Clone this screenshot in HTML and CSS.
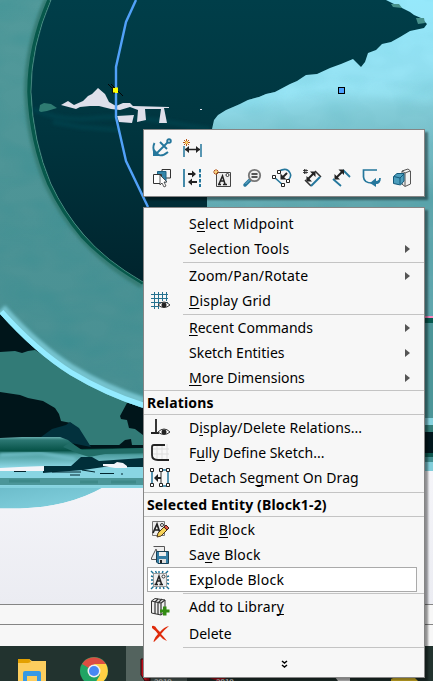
FILE: index.html
```html
<!DOCTYPE html>
<html lang="en">
<head>
<meta charset="utf-8">
<title>Sketch context menu</title>
<link rel="stylesheet" href="styles.css">
</head>
<body>
<svg class="scene" width="433" height="681" viewBox="0 0 433 681">
  <defs>
    <linearGradient id="page" gradientUnits="userSpaceOnUse" x1="0" y1="470" x2="0" y2="604"><stop stop-color="#f5f5f9"/><stop offset="1" stop-color="#ebecf2"/></linearGradient>
    <linearGradient id="deep" x2="0" y2="1"><stop stop-color="#003e49"/><stop offset=".4" stop-color="#003640"/><stop offset="1" stop-color="#00222b"/></linearGradient>
    <linearGradient id="ice" gradientUnits="userSpaceOnUse" x1="330" y1="0" x2="350" y2="205"><stop stop-color="#96e9fc"/><stop offset=".42" stop-color="#96e2f3"/><stop offset=".56" stop-color="#83ccd8"/><stop offset="1" stop-color="#5fa6ad"/></linearGradient>
    <linearGradient id="ring" x2="0" y2="1"><stop stop-color="#529a9b"/><stop offset=".5" stop-color="#4d9496"/><stop offset="1" stop-color="#488f92"/></linearGradient>
    <linearGradient id="pipe" x2="0" y2="1"><stop stop-color="#6aaeaf"/><stop offset=".06" stop-color="#2b7773"/><stop offset=".27" stop-color="#075348"/><stop offset=".36" stop-color="#4f9fa1"/><stop offset=".6" stop-color="#8ad5e2"/></linearGradient>
    <linearGradient id="lower" x2="1" y2="1"><stop stop-color="#6cbcca"/><stop offset=".7" stop-color="#80cedc"/><stop offset="1" stop-color="#438991"/></linearGradient>
    <filter id="soft"><feGaussianBlur stdDeviation="1.6"/></filter>
    <filter id="wide" x="-.1" y="-2" width="1.2" height="5"><feGaussianBlur stdDeviation="4"/></filter>
    <filter id="grain" x="0" y="0" width="1" height="1"><feTurbulence type="fractalNoise" baseFrequency=".025 .045" numOctaves="2" seed="4"/><feColorMatrix values="0 0 0 0 0  0 0 0 0 .22  0 0 0 0 .25  .55 0 0 0 -.2"/></filter>
    <clipPath id="ringclip"><path d="M0 0H51Q31 46 31 92Q33 142 51 184Q64 212 84 235Q105 260 143 282V408Q105 396 70 375Q35 353 0 314Z"/></clipPath>
    <clipPath id="iceclip"><path d="M386 0H433V317H143V208H207V145L212 129 214 120 218 115 226 110 240 104 248 100 259 97 266 94 275 92 290 84 297 81 306 75 317 74 330 68 341 64 353 59 357 63 361 67 365 62 368 53 376 50 382 44 391 42 400 37 410 31 424 28 427 24 421 18 414 15 410 12 402 8Z"/></clipPath>
  </defs>
  <rect width="433" height="604" fill="url(#page)"/>
  <path d="M0 0H433V470H0Z" fill="#00151a"/>
  <path d="M30 0H433V300H143L84 245 30 150Z" fill="url(#deep)"/>
  <path d="M0 352L15 351 22 353 28 351 35 350 60 365 143 404V445H88L82 434 71 423 61 421 59 414 55 408 43 401 28 398 20 395 0 392Z" fill="#327b77"/>
  <path d="M127 403L120 416 121 419 127 420 129 428 135 429 143 435V404Z" fill="#00151a"/>
  <path d="M41 437L52 429 66 425 70 422 79 428 91 447Z" fill="#02313d"/>
  <g clip-path="url(#ringclip)">
    <path d="M0 0H143V420H0Z" fill="url(#ring)"/>
    <rect width="143" height="410" filter="url(#grain)" opacity=".5"/>
    <path d="M0 310Q35 349 70 371Q105 392 143 404" fill="none" stroke="#74c2cd" stroke-width="14" filter="url(#soft)"/>
    <path d="M0 313Q35 352 70 374Q105 395 143 407" fill="none" stroke="#93ebff" stroke-width="9"/>
    <path d="M49 0Q29 46 29 92Q31 142 49 184Q62 212 82 235Q105 262 143 284" fill="none" stroke="#347b74" stroke-width="10" filter="url(#soft)"/>
    <path d="M49 0Q29 46 29 92Q31 142 49 184Q62 212 82 236Q105 261 143 283" fill="none" stroke="#07584b" stroke-width="3.500"/>
  </g>
  <path d="M51 0Q31 46 31 92Q33 142 51 184Q64 212 84 235Q105 260 143 282" fill="none" stroke="#62a495" stroke-width=".7" stroke-opacity=".8"/>
  <path d="M33 109Q60 122 95 118T190 126L210 129M53 122L80 127 120 130" fill="none" stroke="#06424e" stroke-width="5" filter="url(#soft)" opacity=".7"/>
  <path d="M39 111L40 105 44 103 51 104 57 108 47 111 41 112Z" fill="#2e7b72"/>
  <g clip-path="url(#iceclip)">
    <rect x="143" width="290" height="320" fill="url(#ice)"/>
    <path d="M240 102L330 86 433 97" fill="none" stroke="#9ceafa" stroke-width="7" filter="url(#wide)" opacity=".7"/>
    <rect x="200" width="233" height="320" filter="url(#grain)" opacity=".3"/>
  </g>
  <path d="M391 4L399 4 402 8 393 7ZM416 18L424 18 425 23 418 24Z" fill="#47918b"/>
  <path d="M61 105L68 101 74 105 83 101 88 96 92 94 98 88 105 94 109 102 116 106 123 103 130 103 133 106 169 107V108H164L167 123H159L161 109 145 109 146 120 137 122 138 110 130 107 120 110 111 109 99 106 90 106 80 107 76 109Z" fill="#dedfea"/>
  <path d="M117 116L134 115 132 123 119 122ZM200 109H202V110H200Z" fill="#dedfea"/>
  <path d="M136 0L126 22 116 67V117L126 161 148 207" fill="none" stroke="#51a1f8" stroke-width="2.400"/>
  <path d="M108 84L114 90M111 84L123 96M118 91L122 95" stroke="#050505"/>
  <path d="M112.500 87.500H118V93H112.500Z" fill="#ff0"/><path d="M115 87.500H112.500V93H115" fill="none" stroke="#111"/>
  <rect x="338.500" y="87.500" width="6" height="6" fill="#4da2ff" stroke="#000"/>

  <path d="M0 438L22 437 60 437 68 440 79 449 143 448V487H0Z" fill="url(#pipe)"/>
  <path d="M70 442L82 450 143 448V453L105 454 89 457 77 453 63 447Z" fill="#216d67"/>
  <path d="M118 446L125 440 131 439 132 445 128 447Z" fill="#00151a"/>
  <path d="M0 455L40 453 75 459" stroke="#75c2cc" stroke-width="3" fill="none" filter="url(#soft)"/>
  <path d="M71 466L81 457 92 457 99 461 143 458V467H104L99 472 50 474 43 473V466Z" fill="#002e39"/>
  <path d="M0 473L43 473 83 470 104 467 143 467V483H0Z" fill="#89d5e3"/>
  <path d="M52 472H81M82 470L95 472M14 471.500H26M100 473.500H114M70 475H80M121 474H123" stroke="#00242e" stroke-width="1"/>
  <path d="M0 468L19 467 44 466V471L13 471 0 471ZM103 464L114 464 117 462 123 463 127 466V468L115 468 103 466Z" fill="#f3f4f9"/>
  <path d="M0 478H143V485H0Z" fill="#4b9699"/>
  <path d="M9 481H40M80 482H98M111 482H136" stroke="#35827f" stroke-width="3" opacity=".6"/>
  <path d="M0 486H143V488H102Q68 507 20 508.500H0Z" fill="url(#lower)"/>
  <path d="M143 488H102Q68 507 20 508.500H0V530H143Z" fill="url(#page)"/>
  <path d="M0 487H143" stroke="#8dd8e5" stroke-width="1.500"/>
  <g>
    <rect x="425" y="316" width="8" height="2" fill="#f884bd"/>
    <rect x="425" y="318" width="8" height="5" fill="#075a50"/>
    <rect x="425" y="323" width="8" height="95" fill="#4b9598"/>
    <rect x="425" y="418" width="8" height="7" fill="#86d3df"/>
    <rect x="425" y="425" width="8" height="7" fill="#347e79"/>
    <rect x="425" y="432" width="8" height="21" fill="#00171d"/>
    <rect x="425" y="453" width="8" height="4" fill="#0d574f"/>
    <rect x="425" y="457" width="8" height="5" fill="#438f91"/>
    <rect x="425" y="462" width="8" height="9" fill="#81ceda"/>
  </g>
  <rect y="604" width="433" height="42" fill="#f7f7f7"/>
  <path d="M0 604.500H433M0 624.500H433" stroke="#858585"/>
  <rect y="646" width="433" height="35" fill="#22332f"/>
  <rect x="126" y="646" width="61" height="35" fill="#53635e"/>
  <path d="M18 659H29L32 661H46V681H18Z" fill="#fccd5e"/><path d="M18 659H29L31 662 28 663H18Z" fill="#e3a000"/>
  <path d="M23 681V673Q23 671 25 671H39Q41 671 41 673V681H37V676H27V681Z" fill="#3699e5"/>
  <circle cx="94" cy="671" r="14" fill="#20a464"/>
  <path d="M94 671L82 664A14 14 0 0 1 106 664H94Z" fill="#dc4d42"/><path d="M94 664H106A14 14 0 0 1 94 685L100 675Z" fill="#ffcf44"/>
  <circle cx="94" cy="671" r="6.500" fill="#f1f1f1"/><circle cx="94" cy="671" r="5" fill="#4688f4"/>
  <path d="M141 659H150V681H145L141 675Z" fill="#bd0d1a" stroke="#260c0e"/>
  <path d="M207 677H230L218 681Z" fill="#b21018"/><path d="M335 677H350V681H338Z" fill="#ddd"/><path d="M391 679L395 677H414L418 681H391Z" fill="#e8c52c"/>
  <text x="154" y="684" class="year">2019</text><text x="216" y="684" class="year">2019</text>
</svg>

<div class="popup">
  <div class="toolbar">
    <div class="tools">
      <svg viewBox="0 0 20 20"><g fill="none" stroke="#25779c" stroke-width="1.900"><path d="M2.500 5Q0 10 3 16Q10 19.500 16 14M4 16L15.500 4.500M8 4L15 11"/><circle cx="17" cy="3" r="1.800"/><path d="M1 10V18H9Z" fill="#25779c" stroke="none"/></g></svg>
      <svg viewBox="0 0 20 20"><path d="M2 8V19M19 6V19" stroke="#25779c" stroke-width="1.500"/><path d="M3 11.500H18" stroke="#222" stroke-width="1.500"/><path d="M3 11.500L7 8V15ZM18 11.500L14 8V15Z" fill="#222"/><path d="M4.500 1V8M1 4.500H8M2 2L7 7M7 2L2 7" stroke="#b75415"/><circle cx="4.500" cy="4.500" r="1.500" fill="#ffd96b"/></svg>
    </div>
    <div class="tools">
      <svg viewBox="0 0 20 20"><path d="M10 1.500H18.500V10H10Z" fill="#f5f5f5" stroke="#333"/><path d="M5.500 3.500H14V14H5.500Z" fill="#3585a8" stroke="#1c6385"/><path d="M1.500 6.500H9.500V15.500H1.500Z" fill="#fff" stroke="#333"/><path d="M8 7V17L10 15 12 19 14 18 12 14H15Z" fill="#fff" stroke="#333" stroke-width=".8"/></svg>
      <svg viewBox="0 0 20 20"><path d="M2 1V19" stroke="#25779c" stroke-width="1.700"/><path d="M18 1V19" stroke="#25779c" stroke-width="2" stroke-dasharray="3.500 1.500"/><path d="M6 6H13M8 14H15" stroke="#222" stroke-width="2"/><path d="M10 2.500V9.500L14 6ZM10 10.500V17.500L6 14Z" fill="#222"/></svg>
      <svg viewBox="0 0 20 20"><path d="M4.500 4.500H18.500V18.500H4.500Z" fill="#ededed" stroke="#444"/><path d="M6 16.500H9M11 16.500H15M7 16L10.500 8 13 16M8.500 13H12" stroke="#222" stroke-width="1.500" fill="none"/><circle cx="15.500" cy="7" r="1.500" fill="#fff" stroke="#333"/><path d="M4 1V7M1 4H7M2 2L6 6M6 2L2 6" stroke="#b75415"/><circle cx="4" cy="4" r="1.200" fill="#ffd96b"/></svg>
      <svg viewBox="0 0 20 20"><path d="M9 11L3 17" stroke="#25779c" stroke-width="3.500" stroke-linecap="round"/><path d="M3.500 16L8 11.500" stroke="#75b3cf"/><circle cx="12.500" cy="7.500" r="5.700" fill="#eee" stroke="#777" stroke-width="1.800"/><path d="M9.500 6H15.500M9.500 9H15.500" stroke="#222" stroke-width="1.600"/></svg>
      <svg viewBox="0 0 20 20"><path d="M7 3Q15-1 18 5Q20 9 16 12M2 9L11 17" fill="none" stroke="#25779c" stroke-width="1.600"/><path d="M10 10L15 5" stroke="#222" stroke-width="2"/><path d="M8.500 5.500V11.500H14.500Z" fill="#222"/><path d="M5.500 2.500H8.500V5.500H5.500ZM.5 7.500H3.500V10.500H.5ZM14.500 11.500H17.500V14.500H14.500ZM9.500 15.500H12.500V18.500H9.500Z" fill="#fff" stroke="#222"/></svg>
      <svg viewBox="0 0 20 20"><path d="M4 1V6M2.500 1V6M1 2.500H6M1 4.500H6" stroke="#222" stroke-width=".8"/><path d="M3 12L9 18M13 3L19 9" stroke="#333" stroke-width="1.500"/><path d="M9 18L18 9" stroke="#25779c" stroke-width="2"/><path d="M5 12L12 5" stroke="#222" stroke-width="2"/><path d="M4.500 8V13.500H10ZM8 3.500H13.500V9Z" fill="#222"/></svg>
      <svg viewBox="0 0 20 20"><path d="M1 11L9 18M11 2L18 9" stroke="#25779c" stroke-width="1.800"/><path d="M4 10L11 3" stroke="#222" stroke-width="2"/><path d="M2.500 6V11.500H8ZM6.500 1.500H12V7Z" fill="#222"/></svg>
      <svg viewBox="0 0 20 20"><path d="M15 2H1.500V9Q2 15 10 15H13Q18 15 18 10" fill="none" stroke="#25779c" stroke-width="1.700"/><path d="M8 15L14 10V13Q17 13 18 10Q19 16 14 16V19Z" fill="#25779c"/></svg>
      <svg viewBox="0 0 20 20"><path d="M10 3L16 1 18.500 3V16L13 18.500 10 16Z" fill="#f2f2f2" stroke="#555"/><path d="M13 5V18M10 3L13 5 18 3" stroke="#555" fill="none"/><path d="M1.500 8.500L5 5.500H12V13L8.500 17 1.500 15.500Z" fill="#4b9dbc" stroke="#13597a"/><path d="M2 8.500L8 10 12 6M8 10V16" stroke="#13597a" fill="none"/></svg>
    </div>
  </div>

  <div class="menu">
    <div class="row wide"><i></i><span>S<u>e</u>lect Midpoint</span></div>
    <div class="row wide"><i></i><span>Selection Tools</span><b></b></div>
    <div class="sep"></div>
    <div class="row wide"><i></i><span>Zoom/Pan/Rotate</span><b></b></div>
    <div class="row wide"><i><svg viewBox="0 0 20 20"><path d="M1 3.500H18M1 7.500H18M1 11.500H18M1 15.500H9M4.500 1V18M8.500 1V18M12.500 1V10M16.500 1V10" stroke="#25718f"/><path d="M8 14Q14 8 20 14Q14 19 8 14Z" fill="#fff" stroke="#333"/><circle cx="14" cy="14" r="2.500" fill="#222"/></svg></i><span><u>D</u>isplay Grid</span></div>
    <div class="sep"></div>
    <div class="row"><i></i><span><u>R</u>ecent Commands</span><b></b></div>
    <div class="row"><i></i><span>Sketch Entities</span><b></b></div>
    <div class="row"><i></i><span><u>M</u>ore Dimensions</span><b></b></div>
    <div class="heading">Relations</div>
    <div class="row snug"><i><svg viewBox="0 0 20 20"><path d="M6 1V15M1 15H9" stroke="#222" stroke-width="1.800"/><path d="M8 14Q14 8 20 14Q14 19 8 14Z" fill="#fff" stroke="#333"/><circle cx="14" cy="14" r="2.500" fill="#222"/></svg></i><span>D<u>i</u>splay/Delete Relations...</span></div>
    <div class="row"><i><svg viewBox="0 0 20 20"><path d="M7 1V18M12 1V18M17 1V18M2 6H19M2 11H19" stroke="#ddd"/><path d="M15 2H4Q2 2 2 4V12Q2 17 8 17H19" fill="none" stroke="#222" stroke-width="1.800"/></svg></i><span>F<u>u</u>lly Define Sketch...</span></div>
    <div class="row snug"><i><svg viewBox="0 0 20 20"><path d="M2 2V18M11 2H18V18H11" fill="none" stroke="#25779c" stroke-width="1.500"/><path d="M11 2V18" stroke="#333"/><path d="M6 10H11" stroke="#222" stroke-width="2"/><path d="M4 10L8 6V14Z" fill="#222"/><path d="M.5.5H3.500V3.500H.5ZM9.500.5H12.500V3.500H9.500ZM16.500.5H19.500V3.500H16.500ZM.5 15.500H3.500V18.500H.5ZM9.500 15.500H12.500V18.500H9.500ZM16.500 15.500H19.500V18.500H16.500Z" fill="#fff" stroke="#222"/></svg></i><span>Detach Se<u>g</u>ment On Drag</span></div>
    <div class="heading second">Selected Entity (Block1-2)</div>
    <div class="row wide"><i><svg viewBox="0 0 20 20"><path d="M2.500 1.500H14.500V15.500H2.500Z" fill="#eee" stroke="#777"/><path d="M3 13L7 4 10 13M5 10H9" fill="none" stroke="#222" stroke-width="1.700"/><circle cx="12" cy="5" r="1.500" fill="#fff" stroke="#333"/><path d="M7 17L8 13 15 6 18 9 11 16Z" fill="#f7d358" stroke="#4d3516"/><path d="M14 7L16 5 19 8 17 10Z" fill="#da5244" stroke="#47221c"/></svg></i><span>Edit <u>B</u>lock</span></div>
    <div class="row wide"><i><svg viewBox="0 0 20 20"><path d="M3.500 1.500H14.500V14.500H1.500V13L6 4 8 9" fill="#eee" stroke="#555"/><path d="M6.500 6.500H18.500V18.500H8L6.500 17Z" fill="#347da4" stroke="#183e53"/><path d="M9 7H16V11H9Z" fill="#eee"/><path d="M9 14H16V18H9Z" fill="#ddd"/><path d="M11 15V18" stroke="#222" stroke-width="2"/></svg></i><span>Sa<u>v</u>e Block</span></div>
    <div class="row active"><i><svg viewBox="0 0 20 20"><path d="M1 1L4 4M5.500 1L7 4M9 1V4M13 1L12 4M18 1L15 4M1 6L4 7M1 10H4M1 14L4 13M1 19L4 16M6 19L7 16M10 19V16M14 19L13 16M19 19L16 16M19 6L16 7M19 10H16M19 14L16 13" stroke="#177195" stroke-width="1.400"/><path d="M3.500 3.500H16.500V16.500H3.500Z" fill="#eee" stroke="#999"/><path d="M4.500 14.500H8M9.500 14.500H13M6 14L9 6 11.500 14M7 11H11" fill="none" stroke="#222" stroke-width="1.500"/><circle cx="13.500" cy="6.500" r="1.500" fill="#fff" stroke="#333"/></svg></i><span>Ex<u>p</u>lode Block</span></div>
    <div class="sep"></div>
    <div class="row library"><i><svg viewBox="0 0 20 20"><path d="M1.500 4L5 1.500 15 3V15L11 18 1.500 16Z" fill="#eee" stroke="#333"/><path d="M1.500 4L11 6 15 3M5 5V17M8 5.500V17M11 6V18M5 5L8 2M8 6L12 2" fill="none" stroke="#333" stroke-width="1.200"/><path d="M10 12.500H13V9.500H16.500V12.500H19.500V15.500H16.500V18.500H13V15.500H10Z" fill="#328b13"/></svg></i><span>Add to Librar<u>y</u></span></div>
    <div class="row"><i><svg viewBox="0 0 20 20"><path d="M2 2Q5 1 7 5L10 8Q14 3 19 2Q14 6 11 10Q14 13 17 17Q13 16 10 12Q6 16 4 18Q3 18 4 16Q5 13 8 10Q5 6 2 4Z" fill="#df2b0b"/></svg></i><span>Delete</span></div>
    <div class="sep"></div>
    <div class="more"><svg width="8" height="9" viewBox="0 0 8 9"><path d="M1 1L3.500 3 6 1M1 5L3.500 7 6 5" fill="none" stroke="#000" stroke-width="1.500"/></svg></div>
  </div>
</div>
</body>
</html>
```
FILE: styles.css
```css
* { box-sizing: border-box; }
body { margin: 0; width: 433px; height: 681px; overflow: hidden; position: relative; font-family: "Noto Sans", "Open Sans", sans-serif; color: #000; }
.scene { display: block; }
.year { font: bold 8px "Liberation Sans", sans-serif; fill: #ddd; }
.popup { position: absolute; left: 143px; top: 129px; width: 282px; display: flex; flex-direction: column; gap: 10px; }
.toolbar, .menu { background: #f7f7f7; border: 1px solid #858585; box-shadow: 3px 3px 2px rgba(0, 0, 0, .42); }
.toolbar { height: 68px; padding: 8px; display: flex; flex-direction: column; gap: 10px; }
.tools { height: 20px; display: flex; gap: 10px; }
.tools svg { width: 20px; height: 20px; flex: none; }
.menu { height: 471px; padding-top: 3px; }
.row { height: 25px; display: flex; align-items: center; font-size: 14px; line-height: 25px; white-space: nowrap; }
.wide { letter-spacing: .2px; }
.snug { letter-spacing: .08px; }
.row i { width: 45px; height: 20px; padding-left: 6px; flex: none; }
.row i svg { display: block; width: 20px; height: 20px; }
.row b { margin-left: auto; margin-right: 14px; border-left: 5px solid #555; border-top: 4px solid transparent; border-bottom: 4px solid transparent; }
u { text-decoration-thickness: 1px; text-underline-offset: 2px; text-decoration-skip-ink: none; }
.sep { height: 2px; padding-top: 1px; margin-left: 39px; background: #c4c4c4; background-clip: content-box; }
.sep::after { content: ""; display: block; height: 1px; }
.heading { height: 25px; border: solid #c4c4c4; border-width: 1px 0; padding-left: 3px; font-size: 14px; font-weight: bold; line-height: 23px; letter-spacing: .15px; }
.second { margin-top: 2px; }
.active { width: 270px; margin-left: 3px; background: #fff; border: 1px solid #aaa; letter-spacing: .3px; }
.active i { width: 41px; padding-left: 2px; }
.library { margin-bottom: 2px; letter-spacing: .15px; }
.more { height: 29px; padding: 4px 0 0 1px; display: flex; align-items: center; justify-content: center; }
```
